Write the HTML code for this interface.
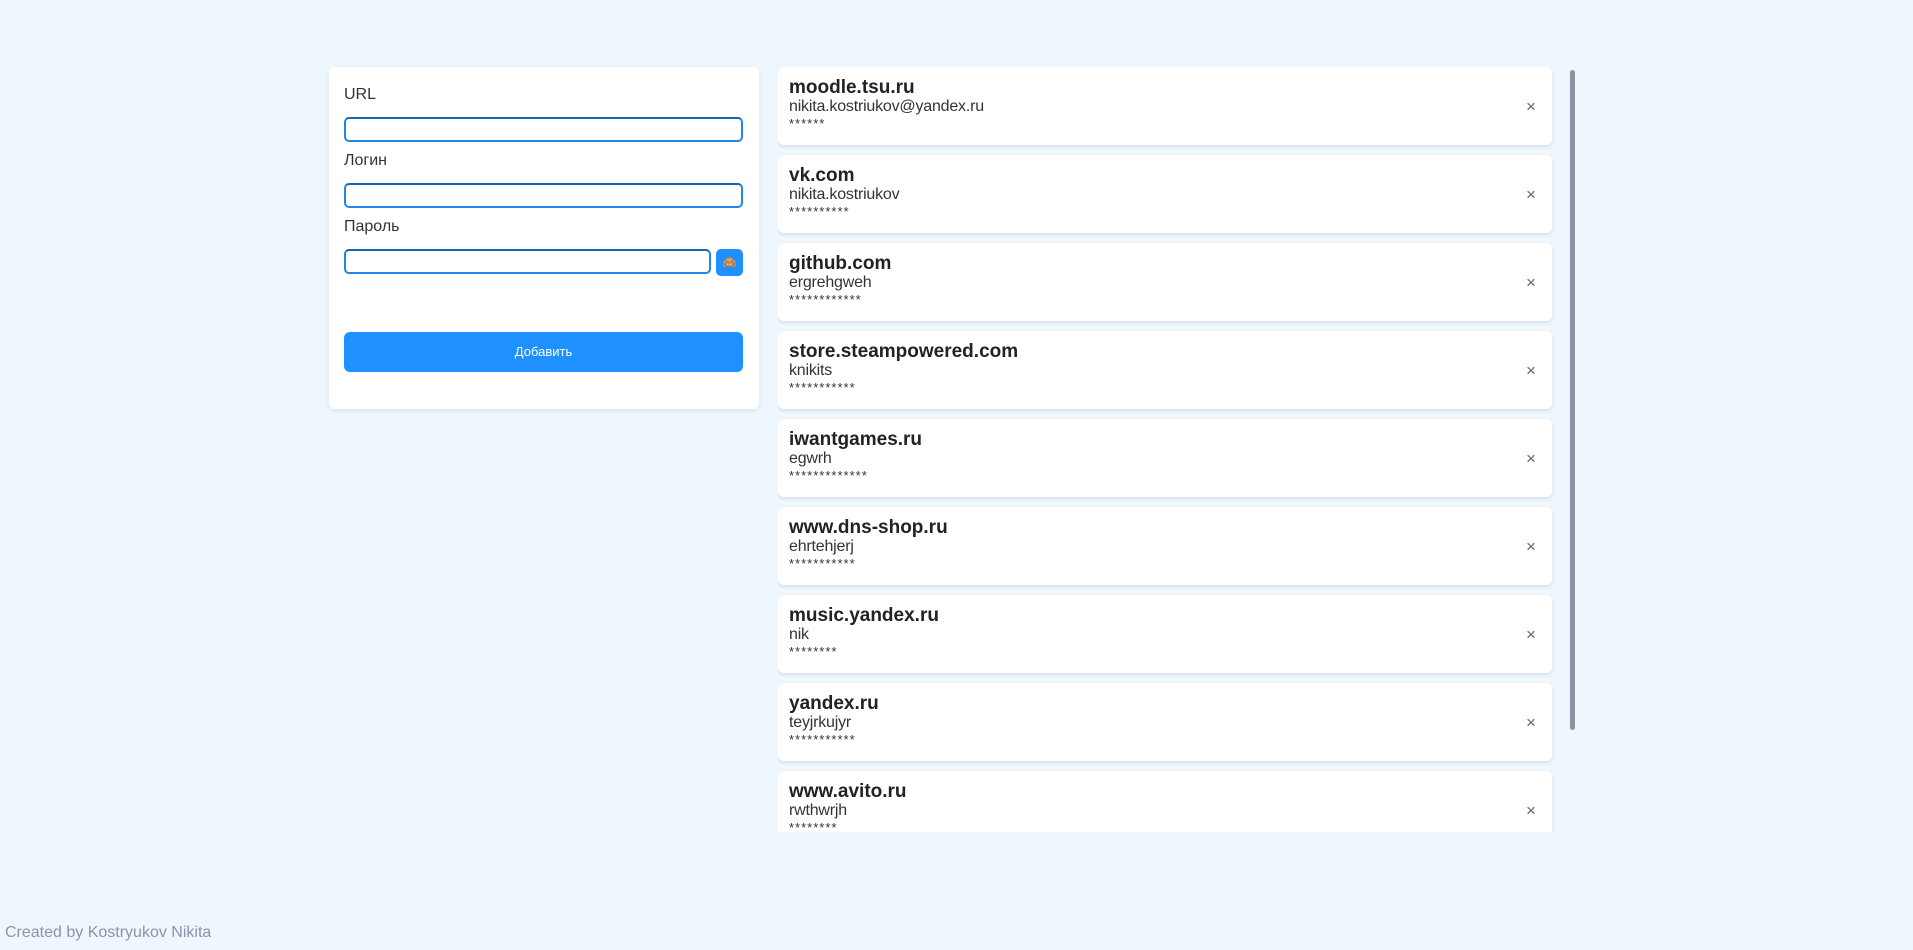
<!DOCTYPE html>
<html><head><meta charset="utf-8"><style>
*{box-sizing:border-box;margin:0;padding:0}
body{width:1913px;height:950px;background:#eef6fe;font-family:"Liberation Sans",Arial,sans-serif;position:relative;overflow:hidden;color:#333}
.panel{position:absolute;left:329px;top:67px;width:430px;height:342px;background:#fff;border-radius:6px;box-shadow:0 2px 6px rgba(0,0,0,.08)}
.lbl{position:absolute;left:15px;font-size:16px;color:#333}
.inp{position:absolute;left:15px;width:399px;height:25px;border:2px solid #1e88e5;border-top-color:#1565b0;border-radius:5px}
.eye{position:absolute;left:387px;top:182px;width:27px;height:27px;background:#1e90ff;border-radius:5px;font-size:12px;text-align:center;line-height:27px}
.add{position:absolute;left:15px;top:265px;width:399px;height:40px;background:#1e90ff;border-radius:6px;color:#fff;font-size:13px;text-align:center;line-height:40px}
.list{position:absolute;left:778px;top:67px;width:780px;height:765px;overflow:hidden}
.card{position:absolute;left:0;width:774px;height:78px;background:#fff;border-radius:6px;box-shadow:0 2px 4px rgba(0,0,0,.1)}
.t{position:absolute;left:11px;top:10px;font-size:19px;font-weight:bold;color:#222}
.l{position:absolute;left:11px;top:31px;font-size:16px;color:#333;letter-spacing:-0.2px}
.s{position:absolute;left:11px;top:49px;font-size:13px;color:#333;letter-spacing:1px}
.x{position:absolute;left:748px;top:30px;font-size:17px;color:#666}
.sb{position:absolute;left:1570px;top:70px;width:5px;height:660px;background:#8a96a3;border-radius:3px}
.foot{position:absolute;left:5px;top:924px;font-size:16px;color:#8a96a8}
</style></head><body>
<div class="panel">
<div class="lbl" style="top:19px">URL</div>
<div class="inp" style="top:50px"></div>
<div class="lbl" style="top:85px">Логин</div>
<div class="inp" style="top:116px"></div>
<div class="lbl" style="top:151px">Пароль</div>
<div class="inp" style="top:182px;width:367px"></div>
<div class="eye">🙈</div>
<div class="add">Добавить</div>
</div>
<div class="list">
<div class="card" style="top:0"><div class="t">moodle.tsu.ru</div><div class="l">nikita.kostriukov@yandex.ru</div><div class="s">******</div><div class="x">×</div></div>
<div class="card" style="top:88px"><div class="t">vk.com</div><div class="l">nikita.kostriukov</div><div class="s">**********</div><div class="x">×</div></div>
<div class="card" style="top:176px"><div class="t">github.com</div><div class="l">ergrehgweh</div><div class="s">************</div><div class="x">×</div></div>
<div class="card" style="top:264px"><div class="t">store.steampowered.com</div><div class="l">knikits</div><div class="s">***********</div><div class="x">×</div></div>
<div class="card" style="top:352px"><div class="t">iwantgames.ru</div><div class="l">egwrh</div><div class="s">*************</div><div class="x">×</div></div>
<div class="card" style="top:440px"><div class="t">www.dns-shop.ru</div><div class="l">ehrtehjerj</div><div class="s">***********</div><div class="x">×</div></div>
<div class="card" style="top:528px"><div class="t">music.yandex.ru</div><div class="l">nik</div><div class="s">********</div><div class="x">×</div></div>
<div class="card" style="top:616px"><div class="t">yandex.ru</div><div class="l">teyjrkujyr</div><div class="s">***********</div><div class="x">×</div></div>
<div class="card" style="top:704px"><div class="t">www.avito.ru</div><div class="l">rwthwrjh</div><div class="s">********</div><div class="x">×</div></div>
</div>
<div class="sb"></div>
<div class="foot">Created by Kostryukov Nikita</div>
</body></html>
